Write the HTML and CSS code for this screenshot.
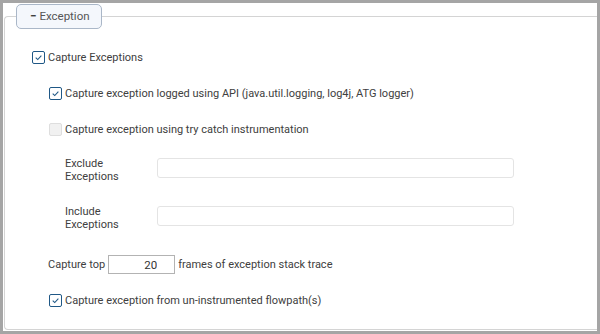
FILE: index.html
```html
<!DOCTYPE html>
<html lang="en">
<head>
    <meta charset="UTF-8">
    <title>Exception</title>
    <link rel="stylesheet" href="styles.css">
</head>
<body>

<div class="frame">
    <fieldset class="group">
        <legend class="group-title"><span class="minus">&minus;</span>Exception</legend>

        <!-- main switch -->
        <div class="row level0 gap20">
            <span class="check on"><svg viewBox="0 0 13 13"><path d="M3.2 6.6 L5.6 8.9 L9.9 4.3" /></svg></span>
            <span>Capture Exceptions</span>
        </div>

        <div class="row level1 gap20">
            <span class="check on"><svg viewBox="0 0 13 13"><path d="M3.2 6.6 L5.6 8.9 L9.9 4.3" /></svg></span>
            <span>Capture exception logged using API (java.util.logging, log4j, ATG logger)</span>
        </div>

        <div class="row level1 gap20">
            <span class="check off"></span>
            <span>Capture exception using try catch instrumentation</span>
        </div>

        <!-- exception lists -->
        <div class="field gap21">
            <label class="field-label">Exclude<br>Exceptions</label>
            <input type="text" class="field-input">
        </div>

        <div class="field gap28">
            <label class="field-label">Include<br>Exceptions</label>
            <input type="text" class="field-input">
        </div>

        <div class="row stack gap29">
            <span>Capture top</span>
            <input type="text" class="frames" value="20">
            <span>frames of exception stack trace</span>
        </div>

        <div class="row level1 gap18">
            <span class="check on"><svg viewBox="0 0 13 13"><path d="M3.2 6.6 L5.6 8.9 L9.9 4.3" /></svg></span>
            <span>Capture exception from un-instrumented flowpath(s)</span>
        </div>
    </fieldset>
</div>

</body>
</html>
```

FILE: styles.css
```css
body {
    margin: 0;
    font-family: Roboto, "Liberation Sans", sans-serif;
    font-size: 11px;
    color: #404040;
}
.frame {
    width: 600px;
    height: 334px;
    box-sizing: border-box;
    border: 3px solid #a5a5a5;
    background-color: #fff;
    padding: 1px 0 1px 1px;
}
.group {
    margin: 0;
    padding: 0;
    height: 326px;
    box-sizing: border-box;
    border: 1px solid #d4d4d4;
    border-right: none;
    border-radius: 4px 0 0 4px;
}
.group-title {
    margin-left: 11px;
    padding: 0 11px 0 13px;
    height: 25px;
    box-sizing: border-box;
    line-height: 23px;
    font-size: 11.5px;
    border: 1px solid #aab7c8;
    border-radius: 5px;
    background-color: #f4f7fc;
    color: #555;
}
.minus {
    font-weight: bold;
    color: #333;
    margin-right: 3px;
}
.row {
    display: flex;
    align-items: center;
    height: 16px;
    white-space: nowrap;
}
.level0 {
    padding-left: 27px;
}
.level1 {
    padding-left: 44px;
}
.stack {
    padding-left: 43px;
    height: 19px;
}
.gap18 { margin-top: 18px; }
.gap20 { margin-top: 20px; }
.gap21 { margin-top: 21px; }
.gap28 { margin-top: 28px; }
.gap29 { margin-top: 29px; }
.check {
    width: 13px;
    height: 13px;
    box-sizing: border-box;
    border-radius: 2px;
    margin-right: 3px;
    flex: none;
}
.check.on {
    border: 1px solid #1f5886;
}
.check.off {
    border: 1px solid #dedede;
    background-color: #f1f1f1;
}
.check svg {
    display: block;
    width: 11px;
    height: 11px;
}
.check path {
    fill: none;
    stroke: #1f5886;
    stroke-width: 1.3;
}
.field {
    display: flex;
    height: 20px;
    padding-left: 60px;
}
.field-label {
    width: 92px;
    line-height: 13px;
    margin-top: -1px;
}
.field-input {
    width: 357px;
    height: 20px;
    box-sizing: border-box;
    margin: 0;
    border: 1px solid #e4e4e4;
    border-radius: 3px;
}
.frames {
    width: 67px;
    height: 19px;
    box-sizing: border-box;
    margin: 0 3px 0 3px;
    border: 1px solid #b3b3b3;
    text-align: right;
    padding: 0 17px 0 0;
    font-family: Roboto, "Liberation Sans", sans-serif;
    font-size: 11.5px;
    color: #333;
}
```
